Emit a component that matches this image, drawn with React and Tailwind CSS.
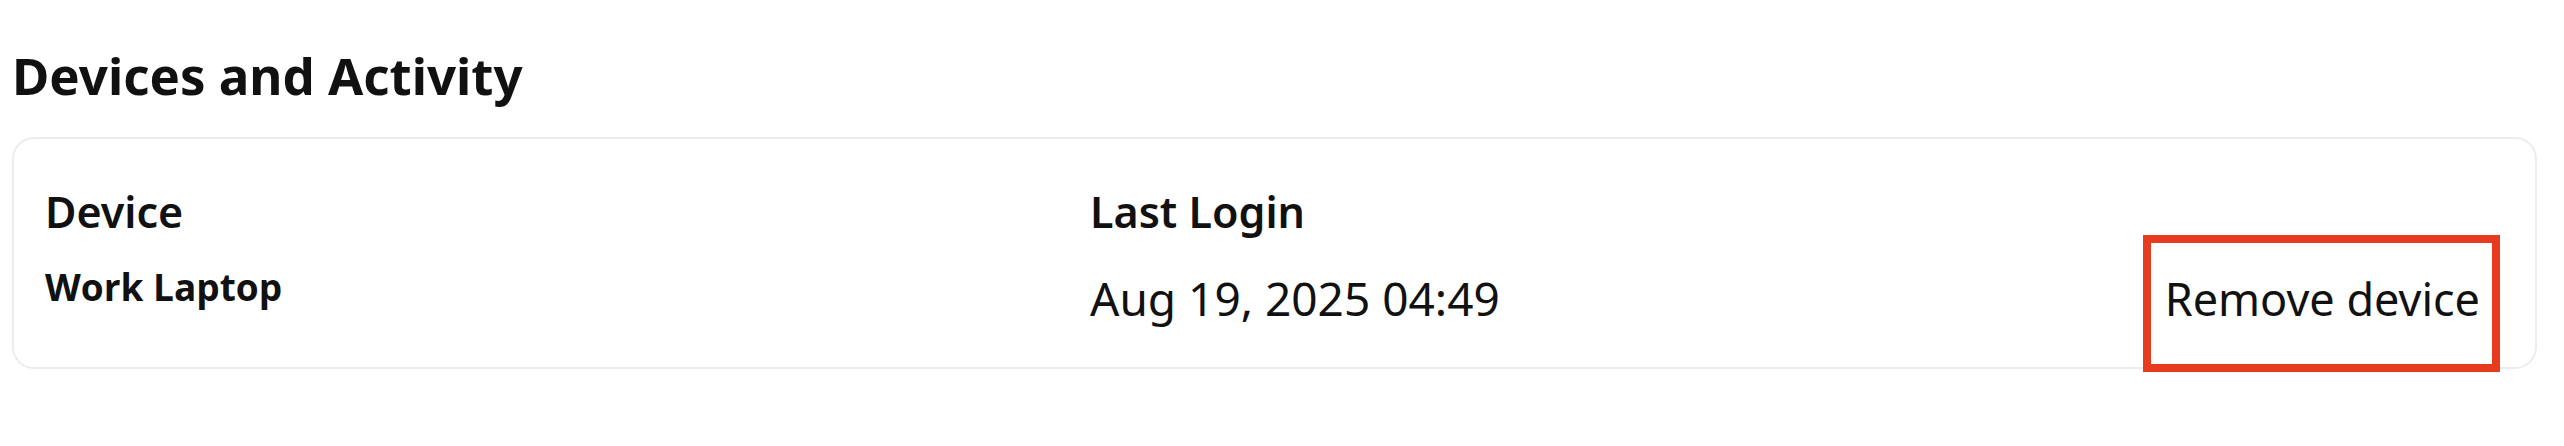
import React from "react";

// One row in the devices table.
function DeviceRow({ device }) {
  return (
    <div className="grid grid-cols-[1045px_1fr_auto] items-start">
      <div className="flex flex-col">
        <span className="font-['Noto_Sans',sans-serif] font-semibold text-[43px] leading-none text-[#111]">
          Device
        </span>
        <span className="mt-[35px] font-['Open_Sans',sans-serif] font-bold text-[37px] leading-none text-[#111]">
          {device.name}
        </span>
      </div>
      <div className="flex flex-col">
        <span className="font-['Noto_Sans',sans-serif] font-semibold text-[43px] leading-none text-[#111]">
          Last Login
        </span>
        <span className="mt-[42px] font-['Noto_Sans',sans-serif] text-[46px] leading-none text-[#111]">
          {device.lastLogin}
        </span>
      </div>
      <button className="mt-[45px] -mb-[5px] border-[8px] border-[#e63b1f] pl-[14px] pr-[12px] pt-[33px] pb-[43px] font-['Noto_Sans',sans-serif] text-[45px] leading-none text-[#111] bg-white">
        Remove device
      </button>
    </div>
  );
}

export default function App() {
  const device = { name: "Work Laptop", lastLogin: "Aug 19, 2025 04:49" };

  return (
    <div className="w-[2564px] h-[446px] bg-white pl-[12px] pr-[27px] pt-[50px]">
      <h2 className="font-['Noto_Sans',sans-serif] font-bold text-[51px] leading-none text-[#111]">
        Devices and Activity
      </h2>
      <div className="mt-[36px] rounded-[22px] border-2 border-[#ececec] pl-[31px] pr-[35px] pt-[51px]">
        <DeviceRow device={device} />
      </div>
    </div>
  );
}
